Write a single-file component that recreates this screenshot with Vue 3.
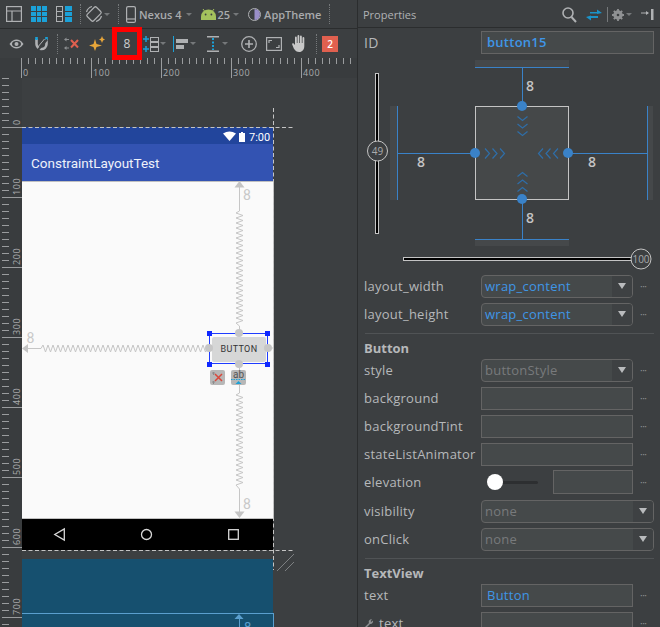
<template>
  <div class="ide">
    <!-- left: design surface -->
    <div class="designPane">
      <div class="toolbar top">
        <svg class="ico m6" width="16" height="16" viewBox="0 0 16 16" fill="none" stroke="#afb1b3" stroke-width="1.2">
          <rect x=".6" y=".6" width="14.8" height="14.8" /><path d="M.6 5h14.8M6 5v10.4" />
        </svg>
        <svg class="ico m9" width="16" height="16" viewBox="0 0 16 16">
          <rect width="16" height="16" fill="#1ba1d8" />
          <path d="M5.5 0v16M10.5 0v16M0 5.5h16M0 10.5h16" stroke="#3c3f41" stroke-width="1" />
        </svg>
        <svg class="ico m9" width="16" height="16" viewBox="0 0 16 16">
          <g fill="none" stroke="#afb1b3"><rect x=".5" y=".5" width="6" height="15" /><path d="M.5 5.5h6M.5 10.5h6" /></g>
          <rect x="9" width="7" height="16" fill="#1ba1d8" /><path d="M9 5.5h7M9 10.5h7" stroke="#3c3f41" />
        </svg>
        <i class="dots m8"></i>
        <svg class="ico m4" width="18" height="18" viewBox="0 0 18 18" fill="none" stroke="#afb1b3" stroke-width="1.2">
          <rect x="4.5" y="2.5" width="9" height="13" rx="1.5" transform="rotate(45 9 9)" />
          <path d="M1.5 7A8 8 0 0 1 7 1.5M16.5 11A8 8 0 0 1 11 16.5" />
        </svg>
        <i class="caret m1"></i>
        <i class="dots m8"></i>
        <svg class="ico m7" width="10" height="17" viewBox="0 0 10 17" fill="none" stroke="#afb1b3" stroke-width="1.2">
          <rect x=".6" y=".6" width="8.8" height="15.8" rx="1.5" /><path d="M.6 13h8.8" />
        </svg>
        <span class="tbText m4 nexus">Nexus 4</span>
        <i class="caret m4"></i>
        <svg class="ico m9" width="15" height="11" viewBox="0 0 15 11">
          <path d="M0 11V7.5A7.5 7 0 0 1 15 7.5V11z" fill="#a4c25d" /><path d="M3.5 2 2 0M11.5 2 13 0" stroke="#a4c25d" />
          <circle cx="4.6" cy="5.5" r=".9" fill="#3c3f41" /><circle cx="10.4" cy="5.5" r=".9" fill="#3c3f41" />
        </svg>
        <span class="tbText m2">25</span>
        <i class="caret m3"></i>
        <svg class="ico m9" width="13" height="13" viewBox="0 0 13 13">
          <circle cx="6.5" cy="6.5" r="6" fill="#3c3f41" stroke="#afb1b3" />
          <path d="M6.5 1a5.5 5.5 0 0 1 0 11z" fill="#9a8fc9" />
        </svg>
        <span class="tbText m3">AppTheme</span>
        <i class="dots m8"></i>
      </div>

      <div class="toolbar second">
        <svg class="ico m9" width="15" height="10" viewBox="0 0 15 10">
          <path d="M.5 5C3 1.500 5 .5 7.500 .5S12 1.500 14.500 5C12 8.500 10 9.500 7.500 9.500S3 8.500 .5 5z" fill="#afb1b3" />
          <ellipse cx="7.500" cy="5" rx="4.500" ry="3" fill="#3c3f41" />
          <circle cx="7.500" cy="5" r="2" fill="#afb1b3" />
        </svg>
        <svg class="ico m11" width="13" height="14" viewBox="0 0 13 14" fill="none">
          <path d="M1.500 2v5a5 5 0 0 0 10 0V2" stroke="#afb1b3" stroke-width="2.600" />
          <path d="M1.500 0v3M11.500 0v3" stroke="#1ba1d8" stroke-width="2.600" />
          <path d="M3 13 12 2.500" stroke="#3c3f41" stroke-width="2" /><path d="M2 11 9.500 2" stroke="#afb1b3" />
        </svg>
        <i class="dots m9"></i>
        <svg class="ico m6" width="16" height="14" viewBox="0 0 16 14">
          <path d="M7 3 14 10.500M14 3 7 10.500" stroke="#e0604f" stroke-width="2" />
          <path d="M1 2.500h4M1 11h4" stroke="#8c8f91" stroke-width="1.200" />
          <path d="M0 2.500 2.500 .5v4zM0 11 2.500 9v4z" fill="#8c8f91" />
        </svg>
        <svg class="ico m9" width="16" height="15" viewBox="0 0 16 15" fill="#e8a63a">
          <path d="M6 3 7.500 8 13 9.500 7.500 11 6 15 4.500 11 0 9.500 4.500 8z" />
          <path d="M13 0 14 2.500 16 3.500 14 4.500 13 7 12 4.500 10 3.500 12 2.500z" />
        </svg>
        <div class="marginBtn">8</div>
        <svg class="ico m1" width="16" height="16" viewBox="0 0 16 16">
          <rect x="7.500" y="1.500" width="8" height="4" fill="none" stroke="#afb1b3" /><rect x="7.500" y="6.500" width="8" height="4" fill="none" stroke="#afb1b3" />
          <rect x="7.500" y="11.500" width="8" height="4" fill="none" stroke="#afb1b3" />
          <path d="M3 0v6M3 10v6M0 3h6M0 13h6" stroke="#1ba1d8" stroke-width="1.500" />
        </svg>
        <i class="caret m1"></i>
        <svg class="ico m7" width="16" height="16" viewBox="0 0 16 16">
          <path d="M.5 0v16" stroke="#1ba1d8" /><rect x="3" y="3" width="12" height="4" fill="#afb1b3" /><rect x="3" y="9" width="8" height="4" fill="#afb1b3" />
        </svg>
        <i class="caret m1"></i>
        <svg class="ico m10" width="14" height="16" viewBox="0 0 14 16">
          <path d="M1 .7h12M1 15.300h12" stroke="#afb1b3" stroke-width="1.500" /><path d="M7 2v12" stroke="#1ba1d8" stroke-width="2" stroke-dasharray="2 1.500" />
        </svg>
        <i class="caret m2"></i>
        <svg class="ico m13" width="16" height="16" viewBox="0 0 16 16" fill="none" stroke="#afb1b3" stroke-width="1.300">
          <circle cx="8" cy="8" r="7.300" /><path d="M4 8h8M8 4v8" stroke-width="1.600" />
        </svg>
        <svg class="ico m9" width="16" height="14" viewBox="0 0 16 14" fill="none" stroke="#afb1b3" stroke-width="1.200">
          <rect x=".6" y=".6" width="14.800" height="12.800" /><path d="M3 6V3.500h3M13 8v2.500h-3" />
        </svg>
        <svg class="ico m10" width="15" height="17" viewBox="0 0 15 17" fill="#c8c8c8">
          <path d="M3 2.500a.9.900 0 0 1 1.800 0V8h.7V1a.9.900 0 0 1 1.800 0v7h.7V1.500a.9.900 0 0 1 1.800 0V8h.7V3a.9.900 0 0 1 1.800 0v8c0 3.500-2 6-5 6-2.500 0-4-1-5.500-3.500L.2 9.500c-.5-1 .8-1.800 1.500-1L3 10z" />
        </svg>
        <i class="dots m9"></i>
        <span class="badge">2</span>
      </div>

      <svg class="surface" width="357" height="569" viewBox="0 58 357 569" font-family="Roboto, sans-serif">
        <!-- rulers -->
        <rect x="0" y="58" width="357" height="20" fill="#393c3e" />
        <rect x="0" y="58" width="22" height="569" fill="#393c3e" />
        <path :d="rulerTicks" stroke="#9a9c9e" fill="none" />
        <text v-for="n in hLabels" :key="n" :x="23 + n * 0.7" y="76" class="rulerText">{{ n }}</text>
        <text
          v-for="n in vLabels"
          :key="'v' + n"
          class="rulerText"
          :transform="`translate(20 ${vPos(n) - 2}) rotate(-90)`"
        >{{ n }}</text>

        <!-- device -->
        <rect x="22" y="127" width="251" height="17" fill="#22459c" />
        <rect x="22" y="144" width="251" height="37" fill="#3353b2" />
        <rect x="22" y="181" width="251" height="337" fill="#fafafa" />
        <path d="M22 181.500h251M22 518.500h251M273.500 181v337" stroke="#c0c0c0" />
        <rect x="22" y="519" width="251" height="31" fill="#000" />
        <path d="M223 133.500Q229.500 129.500 236 133.500L229.500 141z" fill="#fff" />
        <path d="M239 133h2v-1h2v1h2v9h-6z" fill="#fff" />
        <text x="249" y="141" class="clock">7:00</text>
        <text x="31" y="168" class="appTitle">ConstraintLayoutTest</text>

        <!-- nav bar -->
        <g fill="none" stroke="#d8d8d8" stroke-width="1.300">
          <path d="M64.300 529v11l-9.500-5.500z" />
          <circle cx="146.500" cy="534.500" r="5" />
          <rect x="228.700" y="529.700" width="9.600" height="9.600" />
        </g>

        <!-- blueprint -->
        <rect x="22" y="559" width="251" height="68" fill="#16506f" />
        <path d="M22 613.500h251M273.500 613v14" stroke="#5a9fce" />
        <path d="M239 614l4.500 5h-9z" fill="#5a9fce" />
        <path d="M239.500 619v8" stroke="#5a9fce" />
        <text x="244" y="631" class="bpNum">8</text>

        <!-- dashed bounds -->
        <g stroke="#c4c4c4" stroke-dasharray="4 2.500" fill="none">
          <path d="M22 127.500h271M22 550.500h271M273.500 108v19M273.500 127v443" />
        </g>
        <path d="M277 571 294 554M285 571 294 562" stroke="#7d8082" />

        <!-- constraints -->
        <g class="spring" fill="none" stroke="#c6c6c6">
          <polyline :points="topZig" />
          <polyline :points="bottomZig" />
          <polyline :points="leftZig" />
          <path d="M268 348h5" />
        </g>
        <g fill="#c4c4c4">
          <path d="M239.500 181l5 6.500h-10z" />
          <path d="M239.500 518l5-6.500h-10z" />
          <path d="M22 348.500l6-4.500v9z" />
        </g>
        <text x="243" y="200" class="gap8">8</text>
        <text x="243" y="509" class="gap8">8</text>
        <text x="26.500" y="343" class="gap8">8</text>

        <!-- selected button -->
        <rect x="212" y="337" width="54" height="25" rx="2" fill="#d6d7d7" />
        <text x="239" y="352" text-anchor="middle" class="btnText">BUTTON</text>
        <rect x="209.500" y="333.500" width="58" height="30" fill="none" stroke="#1f3cff" />
        <g fill="#c6c6c6">
          <circle cx="239" cy="333" r="4" /><circle cx="239" cy="364" r="4" />
          <circle cx="209" cy="348" r="4" /><circle cx="268" cy="348" r="4" />
        </g>
        <g fill="#0f28ff">
          <rect x="207" y="331" width="5" height="5" /><rect x="265" y="331" width="5" height="5" />
          <rect x="207" y="362" width="5" height="5" /><rect x="265" y="362" width="5" height="5" />
        </g>
        <rect x="210" y="370" width="15" height="15" rx="2" fill="#b7b7b7" />
        <path d="M215 374l7 7M222 374l-7 7" stroke="#d9483b" stroke-width="1.500" />
        <path d="M212 373h3M213.500 372v3M212 382h3M213.500 381v3" stroke="#8c8c8c" />
        <rect x="231" y="370" width="15" height="15" rx="2" fill="#b7b7b7" />
        <text x="238.500" y="378" text-anchor="middle" class="abText">ab</text>
        <path d="M231 379.500h15" stroke="#1ba1d8" stroke-dasharray="1.500 1" />
        <path d="M238.500 381l3 3h-6z" fill="#1ba1d8" />
      </svg>
    </div>

    <!-- right: properties -->
    <div class="propsPane">
      <div class="propsHeader">
        <span class="propsTitle">Properties</span>
        <svg class="hIcon searchIco" width="15" height="16" viewBox="0 0 15 16" fill="none" stroke="#afb1b3" stroke-width="1.600">
          <circle cx="6" cy="6" r="5" /><path d="M9.500 10 14 15" stroke-width="2" />
        </svg>
        <svg class="hIcon swapIco" width="16" height="12" viewBox="0 0 16 12" fill="#1b93c9">
          <path d="M4 3h7V.5L16 4l-5 1V4.500H4zM0 8l5-1.500V7h7v2H5v2.500z" />
        </svg>
        <i class="hSep"></i>
        <svg class="hIcon" width="12" height="12" viewBox="0 0 12 12">
          <circle cx="6" cy="6" r="3.500" fill="none" stroke="#8f9193" stroke-width="2.500" />
          <path d="M6 0v12M0 6h12M1.800 1.800l8.400 8.400M10.200 1.800l-8.400 8.400" stroke="#8f9193" stroke-width="1.800" />
          <circle cx="6" cy="6" r="1.300" fill="#3c3f41" />
        </svg>
        <i class="caret m2"></i>
        <svg class="hIcon pinIco" width="13" height="12" viewBox="0 0 13 12">
          <path d="M0 4h7" stroke="#afb1b3" /><path d="M5 2l3 2-3 2z" fill="#afb1b3" /><rect x="10" y="0" width="2.500" height="11" fill="#afb1b3" />
        </svg>
      </div>

      <div class="idRow">
        <span class="label idLabel">ID</span>
        <div class="field blue idField">button15</div>
      </div>

      <svg class="widget" width="302" height="216" viewBox="358 56 302 216" font-family="Open Sans, sans-serif">
        <g fill="#45484a">
          <rect x="475" y="60" width="94" height="7" /><rect x="475" y="239.500" width="94" height="6.500" />
          <rect x="390" y="106" width="7" height="94" /><rect x="647" y="106" width="6" height="94" />
        </g>
        <rect x="475.500" y="106.500" width="93" height="93" fill="#454849" stroke="#c4c4c4" />
        <g stroke="#3a82c8" fill="none">
          <path d="M475 67.500h94M475 239.500h94M397.500 106v94M647.500 106v94" />
          <path d="M522.500 67v39M522.500 199v40M397 153.500h78M568 153.500h79" />
        </g>
        <g fill="#3a82c8">
          <circle cx="522" cy="106" r="5" /><circle cx="522" cy="199" r="5" />
          <circle cx="475" cy="153" r="5" /><circle cx="568" cy="153" r="5" />
        </g>
        <g fill="none" stroke="#2f6ea8" stroke-width="1.200">
          <path v-for="c in chevrons" :key="c" :d="c" />
        </g>
        <g class="gapNum" text-anchor="middle">
          <text x="530" y="91">8</text><text x="530" y="223">8</text>
          <text x="421" y="167">8</text><text x="592" y="167">8</text>
        </g>

        <rect x="375.500" y="73.500" width="3" height="160" fill="#000" stroke="#c4c4c4" />
        <circle cx="377.500" cy="151" r="10" fill="#3c3f41" stroke="#c4c4c4" />
        <text x="377.500" y="155" text-anchor="middle" class="bias">49</text>
        <rect x="403.500" y="257.500" width="237" height="3" fill="#000" stroke="#c4c4c4" />
        <circle cx="641" cy="259" r="10" fill="#3c3f41" stroke="#c4c4c4" />
        <text x="641" y="263" text-anchor="middle" class="bias">100</text>
      </svg>

      <template v-for="item in rows" :key="item.label">
        <div v-if="item.type === 'sep'" class="sep"></div>
        <div v-else-if="item.type === 'head'" class="head">{{ item.label }}</div>
        <div v-else class="row" :class="{ extra: item.label === 'visibility' }">
          <span class="label" :class="{ wrench: item.wrench }">
            <svg v-if="item.wrench" width="10" height="10" viewBox="0 0 10 10">
              <path d="M1 9 5 5a2.500 2.500 0 0 1 3-3.500L6.500 3l1 1 1.300-1.500A2.500 2.500 0 0 1 6 6L2 10z" fill="#8c8f91" />
            </svg>
            {{ item.label }}
          </span>
          <div v-if="item.type === 'slider'" class="sliderCell">
            <i class="track"><i class="thumb"></i></i>
            <div class="field short"></div>
          </div>
          <div v-else class="field" :class="[item.tone, { select: item.select, wide: item.wide }]">
            <span>{{ item.value }}</span>
            <b v-if="item.select" class="arrowBox"><i></i></b>
          </div>
          <span v-if="!item.wide" class="more">···</span>
        </div>
      </template>
    </div>
  </div>
</template>

<script setup>
const hLabels = [0, 100, 200, 300, 400];
const vLabels = [0, 100, 200, 300, 400, 500, 600, 700];

function vPos(n) {
  return 127 + n * 0.7;
}

// ruler ticks, every 10dp
function buildTicks() {
  let d = "";
  for (let i = 0; i <= 48; i++) {
    const x = Math.round(22 + i * 7) - 0.5;
    d += `M${x} 58v${i % 10 === 0 ? 20 : 6}`;
  }
  for (let i = -9; i <= 72; i++) {
    const y = Math.round(127 + i * 7) + 0.5;
    if (y < 78) continue;
    d += `M2 ${y}h${i % 10 === 0 ? 20 : 7}`;
  }
  return d;
}
const rulerTicks = buildTicks();

function zigzag(x1, y1, x2, y2, step = 2.5, amp = 3.5) {
  const horizontal = y1 === y2;
  const len = horizontal ? x2 - x1 : y2 - y1;
  const n = Math.floor(Math.abs(len) / step);
  const sign = Math.sign(len);
  const pts = [];
  for (let i = 0; i <= n; i++) {
    const off = i % 2 ? amp : -amp;
    pts.push(horizontal ? `${x1 + sign * i * step},${y1 + off}` : `${x1 + off},${y1 + sign * i * step}`);
  }
  return pts;
}

const topZig = ["239.5,186", "239.5,211", ...zigzag(239.5, 213, 239.5, 324), "239.5,326", "239.5,330"].join(" ");
const bottomZig = ["239.5,368", "239.5,393", ...zigzag(239.5, 395, 239.5, 487), "239.5,489", "239.5,514"].join(" ");
const leftZig = ["26,348.5", "41,348.5", ...zigzag(43, 348.5, 206, 348.5), "208,348.5"].join(" ");

const chevrons = [
  "M517.500 116.500l5 4 5-4", "M517.500 124l5 4 5-4", "M517.500 131.500l5 4 5-4",
  "M517.500 176.500l5-4 5 4", "M517.500 184l5-4 5 4", "M517.500 191.500l5-4 5 4",
  "M485 148.500l4.500 5-4.500 5", "M492.500 148.500l4.500 5-4.500 5", "M500 148.500l4.500 5-4.500 5",
  "M543 148.500l-4.500 5 4.500 5", "M550.500 148.500l-4.500 5 4.500 5", "M558 148.500l-4.500 5 4.500 5",
];

const rows = [
  { label: "layout_width", value: "wrap_content", tone: "blue", select: true },
  { label: "layout_height", value: "wrap_content", tone: "blue", select: true },
  { type: "sep", label: "s1" },
  { type: "head", label: "Button" },
  { label: "style", value: "buttonStyle", tone: "muted", select: true },
  { label: "background" },
  { label: "backgroundTint" },
  { label: "stateListAnimator" },
  { label: "elevation", type: "slider" },
  { label: "visibility", value: "none", tone: "muted", select: true, wide: true },
  { label: "onClick", value: "none", tone: "muted", select: true, wide: true },
  { type: "sep", label: "s2" },
  { type: "head", label: "TextView" },
  { label: "text", value: "Button", tone: "blue inset" },
  { label: "text ", wrench: true },
];
</script>

<style>
html,
body {
  background: #3c3f41;
}
</style>

<style scoped>
.ide {
  display: flex;
  width: 660px;
  height: 627px;
  overflow: hidden;
  background: #3c3f41;
  color: #bbbbbb;
  font-family: "Open Sans", sans-serif;
}

.designPane {
  width: 357px;
  flex: none;
  display: flex;
  flex-direction: column;
  border-right: 1px solid #2b2d2e;
  box-sizing: content-box;
}

.toolbar {
  display: flex;
  align-items: center;
  flex: none;
}
.toolbar.top {
  height: 28px;
  border-bottom: 1px solid #2b2d2e;
}
.toolbar.second {
  height: 29px;
}

.ico,
.hIcon {
  flex: none;
  display: block;
}
.m1 { margin-left: 1px; }
.m2 { margin-left: 2px; }
.m3 { margin-left: 3px; }
.m4 { margin-left: 4px; }
.m6 { margin-left: 6px; }
.m7 { margin-left: 7px; }
.m8 { margin-left: 8px; }
.m9 { margin-left: 9px; }
.m10 { margin-left: 10px; }
.m11 { margin-left: 11px; }
.m13 { margin-left: 13px; }

.dots {
  flex: none;
  width: 0;
  height: 20px;
  border-left: 1px dotted #75787a;
}
.caret {
  flex: none;
  width: 0;
  height: 0;
  border-left: 3px solid transparent;
  border-right: 3px solid transparent;
  border-top: 3px solid #75787a;
}
.tbText {
  flex: none;
  font-size: 11px;
  font-weight: 600;
  color: #a9abad;
}
.tbText.nexus {
  margin-left: 3px;
}

.marginBtn {
  flex: none;
  position: relative;
  z-index: 2;
  box-sizing: border-box;
  width: 30px;
  height: 33px;
  margin-left: 7px;
  border: 5px solid #ff0000;
  background: #3c3f41;
  display: flex;
  align-items: center;
  justify-content: center;
  font-size: 12px;
  color: #d0d0d0;
}

.badge {
  flex: none;
  width: 16px;
  height: 16px;
  margin-left: 5px;
  background: #e0604f;
  color: #fff;
  font-size: 10px;
  font-weight: 600;
  line-height: 16px;
  text-align: center;
}

.surface {
  display: block;
  flex: none;
}
.rulerText {
  font-family: "Open Sans", sans-serif;
  font-size: 9px;
  letter-spacing: 0.6px;
  fill: #a9abad;
}
.clock {
  font-size: 11px;
  fill: #fff;
}
.appTitle {
  font-size: 13.5px;
  font-weight: 400;
  fill: #eef1fa;
}
.gap8 {
  font-size: 14px;
  fill: #c8c8c8;
}
.bpNum {
  font-size: 13px;
  fill: #5a9fce;
}
.btnText {
  font-size: 9px;
  font-weight: 400;
  letter-spacing: 0.35px;
  fill: #333;
}
.abText {
  font-size: 10px;
  fill: #555;
}

.propsPane {
  flex: 1;
  min-width: 0;
  display: flex;
  flex-direction: column;
}
.propsHeader {
  height: 25px;
  margin-top: 2px;
  flex: none;
  display: flex;
  align-items: center;
  padding-left: 5px;
  border-bottom: 1px solid #2b2d2e;
}
.propsTitle {
  font-size: 11px;
  color: #b0b2b4;
  margin-right: auto;
}
.swapIco {
  margin-left: 9px;
}
.hSep {
  flex: none;
  width: 1px;
  height: 15px;
  margin: 0 4px 0 5px;
  background: #75787a;
}
.pinIco {
  margin: 0 6px 0 9px;
}

.idRow {
  flex: none;
  height: 28px;
  display: grid;
  grid-template-columns: 117px 173px;
  align-items: center;
  padding-left: 6px;
}
.label.idLabel {
  font-size: 14px;
}

.widget {
  display: block;
  flex: none;
}
.gapNum {
  font-size: 14px;
  font-weight: 600;
  fill: #c4c4c4;
}
.bias {
  font-size: 10px;
  fill: #a9abad;
}

.row {
  flex: none;
  height: 28px;
  display: grid;
  grid-template-columns: 117px 152px 1fr;
  align-items: center;
  padding-left: 6px;
}
.row.extra {
  margin-top: 1px;
}
.label {
  font-size: 13px;
  letter-spacing: 0.25px;
  white-space: nowrap;
  color: #b6b8ba;
}
.label.wrench {
  display: flex;
  align-items: center;
  gap: 5px;
}
.head {
  flex: none;
  height: 18px;
  line-height: 21px;
  padding-left: 6px;
  font-size: 13px;
  font-weight: 700;
  color: #b6b8ba;
}
.sep {
  flex: none;
  height: 1px;
  margin: 5px 6px 4px 7px;
  background: #505355;
}

.field {
  box-sizing: border-box;
  height: 23px;
  display: flex;
  align-items: center;
  padding-left: 3px;
  background: #45494a;
  border: 1px solid #646464;
  font-size: 13px;
  letter-spacing: 0.25px;
}
.field.idField {
  width: 173px;
  padding-left: 5px;
  font-weight: 600;
}
.field.blue {
  color: #3f96e6;
}
.field.inset {
  padding-left: 5px;
}
.field.muted {
  color: #787a7c;
}
.field.select {
  position: relative;
  border-radius: 4px;
  overflow: hidden;
}
.field.wide {
  grid-column: 2 / 4;
  width: 173px;
}
.arrowBox {
  position: absolute;
  top: 0;
  right: 0;
  bottom: 0;
  width: 20px;
  background: #3e4143;
  display: flex;
  align-items: center;
  justify-content: center;
}
.arrowBox i {
  width: 0;
  height: 0;
  border-left: 4.5px solid transparent;
  border-right: 4.5px solid transparent;
  border-top: 6px solid #b9bbbd;
}
.more {
  font-size: 10px;
  letter-spacing: -0.5px;
  color: #8c8f91;
  padding-left: 7px;
  line-height: 10px;
}

.sliderCell {
  display: flex;
  align-items: center;
  justify-content: space-between;
}
.track {
  position: relative;
  display: block;
  width: 51px;
  height: 3px;
  margin-left: 6px;
  background: #2d2f31;
  border-radius: 2px;
}
.thumb {
  position: absolute;
  left: 0;
  top: -6.5px;
  width: 16px;
  height: 16px;
  border-radius: 50%;
  background: #fff;
}
.field.short {
  width: 80px;
  height: 24px;
}
</style>
